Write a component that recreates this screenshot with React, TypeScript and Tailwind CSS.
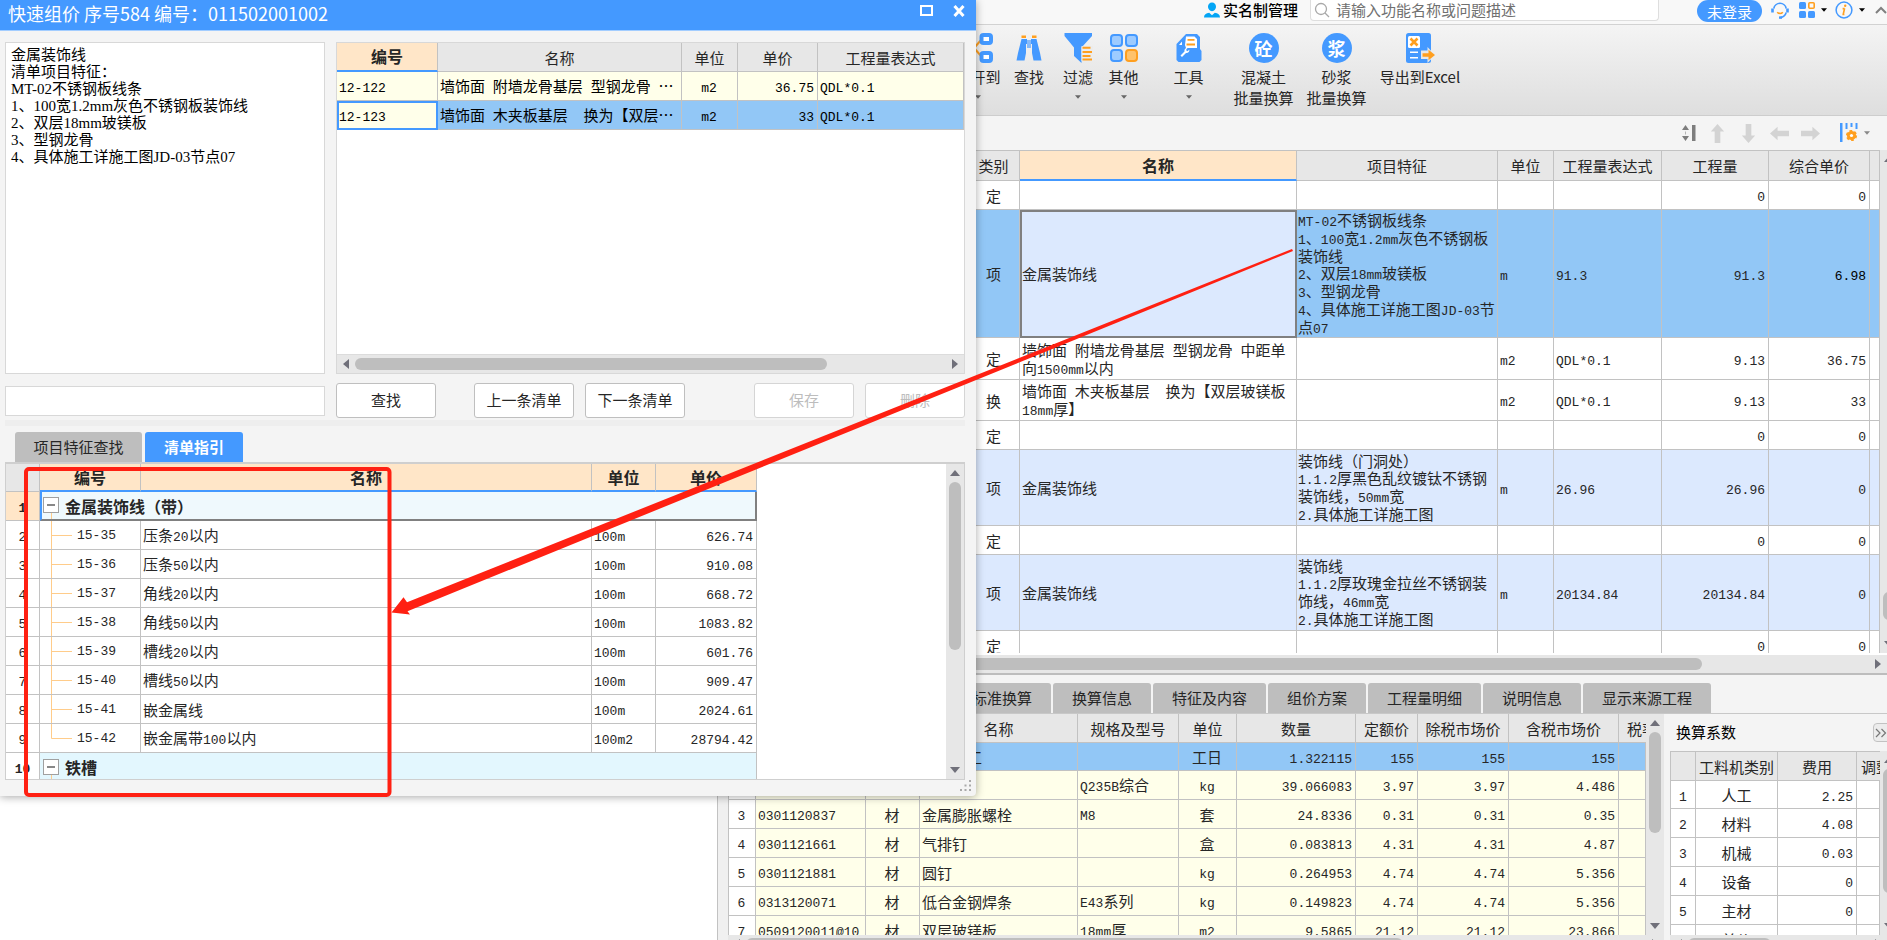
import React from "react";
import clsx from "clsx";

/* Latin runs use a narrow mono face, Chinese runs keep the page font. */
function T({ children }: { children: string }) {
  const parts = children.split(/([\x20-\x7e]+)/).filter(Boolean);
  return (
    <>
      {parts.map((p, i) =>
        /^[\x20-\x7e]/.test(p) ? (
          <span key={i} className="font-['Liberation_Mono','Noto_Sans_CJK_SC',monospace] text-[13px] leading-none">
            {p}
          </span>
        ) : (
          <React.Fragment key={i}>{p}</React.Fragment>
        )
      )}
    </>
  );
}

const TABLE = "w-full table-fixed border-separate border-spacing-0";
const BARE = "overflow-hidden whitespace-pre border-b border-r border-[#c2c2c2] py-0 align-middle leading-[17px]";
const CELL = "overflow-hidden whitespace-pre border-b border-r border-[#c2c2c2] py-0 pl-0.5 pr-[3px] align-middle leading-[17px]";
const HEAD = "overflow-hidden whitespace-nowrap border-b border-r border-[#c2c2c2] py-0 text-center font-normal leading-[17px]";

function Tri({ dir, small, className }: { dir: "up" | "down" | "left" | "right"; small?: boolean; className?: string }) {
  const d = {
    up: "M0 6 5 0 10 6Z",
    down: "M0 0 10 0 5 6Z",
    left: "M6 0 6 10 0 5Z",
    right: "M0 0 6 5 0 10Z",
  }[dir];
  const vertical = dir === "up" || dir === "down";
  const size = small ? "h-1 w-1.5" : vertical ? "h-1.5 w-2.5" : "h-2.5 w-1.5";
  return (
    <svg viewBox={vertical ? "0 0 10 6" : "0 0 6 10"} className={clsx("shrink-0", size, className)} fill="currentColor" aria-hidden="true">
      <path d={d} />
    </svg>
  );
}

function HScroll({ thumb }: { thumb: string }) {
  return (
    <div className="flex h-[18px] shrink-0 items-center gap-1.5 bg-[#e7e7e7] px-1.5 text-[#70707a]">
      <Tri dir="left" />
      <div className="h-3 flex-1">
        <div className={clsx("h-3 rounded-full bg-[#bebebe]", thumb)} />
      </div>
      <Tri dir="right" />
    </div>
  );
}

function VScroll({ thumb }: { thumb: string }) {
  return (
    <div className="flex w-[18px] shrink-0 flex-col items-center bg-[#e7e7e7] py-1.5 text-[#70707a]">
      <Tri dir="up" />
      <div className="my-1.5 w-3 flex-1">
        <div className={clsx("w-3 rounded-full bg-[#bebebe]", thumb)} />
      </div>
      <Tri dir="down" />
    </div>
  );
}

/* ---------- top bar ---------- */

function TopBar() {
  return (
    <header className="flex h-[25px] shrink-0 items-start justify-end border-b border-[#d2d2d2] bg-[#f8f8f8]">
      <button className="mr-3 flex h-5 items-center gap-[3px] font-medium text-black">
        <svg viewBox="0 0 16 16" className="size-4" fill="#04a5f5" aria-hidden="true">
          <path d="M8 0.5c2.400 0 4 1.700 4 4.100C12 7 10.300 9.300 8 9.300S4 7 4 4.600C4 2.200 5.600 0.500 8 0.500Z" />
          <path d="M0 15.500c0-3 2-4.200 5.200-4.700L8 13.200l2.800-2.400C14 11.300 16 12.500 16 15.500Z" />
        </svg>
        实名制管理
      </button>
      <label className="mr-[38px] flex h-[21px] w-[349px] items-center gap-1.5 rounded-b border border-t-0 border-[#dedede] bg-white pl-[3px]">
        <svg viewBox="0 0 16 16" className="size-4" fill="none" stroke="#a8a8a8" strokeWidth="1.300" aria-hidden="true">
          <circle cx="7" cy="7" r="5.500" />
          <path d="m11 11 4 4" />
        </svg>
        <input
          aria-label="搜索功能"
          placeholder="请输入功能名称或问题描述"
          className="min-w-0 flex-1 bg-transparent outline-none placeholder:text-[#707070]"
        />
      </label>
      <button className="mr-[9px] h-[22px] w-[65px] rounded-full bg-[#4499ff] leading-[21px] text-white">未登录</button>
      <button aria-label="客服" className="mr-2.5 mt-px">
        <svg viewBox="0 0 18 18" className="size-[18px]" fill="none" stroke="#4499ff" strokeWidth="1.600" aria-hidden="true">
          <path d="M2.800 7.500a6.300 6.300 0 0 1 12.400 0M15.200 11.500c-.8 2.800-2.800 4.600-5.700 4.900" />
          <path d="M1.500 7.500v4M16.500 7.500v4" strokeWidth="2.600" />
          <path d="M8 16.600h3" strokeWidth="2.400" />
          <path d="M6.200 11.200c1.600 1.700 4 1.700 5.600 0" stroke="#ff9f1f" />
        </svg>
      </button>
      <button aria-label="应用" className="mr-2 mt-0.5 flex items-center gap-1.5 text-black">
        <svg viewBox="0 0 16 16" className="size-4" fill="#4499ff" aria-hidden="true">
          <rect width="7" height="7" rx="1.500" />
          <rect y="9" width="7" height="7" rx="1.500" />
          <rect x="9" y="9" width="7" height="7" rx="1.500" />
          <rect x="9.800" y="0.800" width="5.400" height="5.400" rx="1" fill="none" stroke="#ff9f1f" strokeWidth="1.600" />
        </svg>
        <Tri dir="down" small />
      </button>
      <button aria-label="信息" className="mr-2.5 mt-px flex items-center gap-1.5 text-black">
        <svg viewBox="0 0 18 18" className="size-[18px]" fill="none" aria-hidden="true">
          <circle cx="9" cy="9" r="7.900" stroke="#4499ff" strokeWidth="1.500" />
          <path d="M9.600 7.300 8.200 13.500M7.600 7.600h2M7.400 13.500h2" stroke="#ff9f1f" strokeWidth="1.600" />
          <circle cx="10.200" cy="4.800" r="1.200" fill="#ff9f1f" />
        </svg>
        <Tri dir="down" small />
      </button>
      <button aria-label="收起" className="mt-1.5">
        <svg viewBox="0 0 12 8" className="h-2 w-3" fill="none" stroke="#808080" strokeWidth="2" aria-hidden="true">
          <path d="m1 7 5-5 5 5" />
        </svg>
      </button>
    </header>
  );
}

/* ---------- ribbon ---------- */

const ICON = "size-[30px]";

const ExpandIcon = () => (
  <svg viewBox="0 0 30 30" className={ICON} fill="none" aria-hidden="true">
    <path d="M5 15h6M11 15l8-9M11 15l8 9" stroke="#ff9f1f" strokeWidth="2" />
    <rect x="18.500" y="2" width="9.500" height="8" rx="2" stroke="#4499ff" strokeWidth="4" fill="#fff" />
    <rect x="18.500" y="20" width="9.500" height="8" rx="2" stroke="#4499ff" strokeWidth="4" fill="#fff" />
  </svg>
);
const FindIcon = () => (
  <svg viewBox="0 0 30 30" className={ICON} fill="#4499ff" aria-hidden="true">
    <path d="M7.500 6h5.500v5h-1v9l-1.500 7.500H2.500L4 20Z" />
    <path d="M22.500 6H17v5h1v9l1.500 7.500h8L26 20Z" />
    <rect x="13.400" y="7" width="1.200" height="8" />
    <rect x="15.400" y="7" width="1.200" height="8" />
    <rect x="7.500" y="2.500" width="4.500" height="2.500" fill="#ff9f1f" />
    <rect x="18" y="2.500" width="4.500" height="2.500" fill="#ff9f1f" />
  </svg>
);
const FilterIcon = () => (
  <svg viewBox="0 0 30 30" className={ICON} fill="#4499ff" aria-hidden="true">
    <path d="M1.500 0h27.500v3L18.500 14.500V30L11 23V14.500L1.500 3Z" />
    <path d="M18.500 13h11.500v15h-11.500Z" fill="#ececec" />
    <path d="M19.500 13.800h8v2h-8ZM19.500 18h9.500v2h-9.500ZM19.500 22h8v2h-8ZM19.500 25.500h9.500v2h-9.500Z" fill="#ff9f1f" />
  </svg>
);
const OtherIcon = () => (
  <svg viewBox="0 0 30 30" className={ICON} fill="#9dcbff" stroke="#4499ff" strokeWidth="2" aria-hidden="true">
    <rect x="2" y="2" width="11" height="11" rx="3" />
    <rect x="17" y="2" width="11" height="11" rx="3" />
    <rect x="2" y="17" width="11" height="11" rx="3" />
    <rect x="17" y="17" width="11" height="11" rx="3" fill="#ffc26b" stroke="#ff9f1f" />
  </svg>
);
const ToolIcon = () => (
  <svg viewBox="0 0 30 30" className={ICON} fill="#4499ff" aria-hidden="true">
    <path d="M2.500 27V11L12 1h11l3 3v12l1.500 2v9l-2 2H4.500Z" />
    <path d="M5 12 8 8.500V12ZM12 3.500h8.500L23 6v9H12l-1-3Z" fill="#fff" />
    <path d="M13.500 6h7v1.800h-7ZM12.500 10.500h8.500v2h-8.500Z" fill="#ff9f1f" />
    <path d="m6.500 22.500 4-4c-.5-2 1-3.800 3-3.500l-1.500 2 1.300 1.300 2-1.500c.5 2-1.300 3.500-3.300 3.200l-4 4Z" fill="#fff" />
  </svg>
);
const ExcelIcon = () => (
  <svg viewBox="0 0 30 30" className={ICON} fill="none" aria-hidden="true">
    <rect x="1" y="0" width="25" height="30" rx="2.500" fill="#4499ff" />
    <rect x="3" y="3" width="12" height="12" rx="1.500" fill="#fff" />
    <path d="m5.500 5.500 7 7M12.500 5.500l-7 7" stroke="#ff9f1f" strokeWidth="2.600" />
    <path d="M5 19.200h8M5 24.800h8" stroke="#fff" strokeWidth="1.600" />
    <path d="M16 17.500h6.500V14L30 22l-7.500 8v-4H16Z" fill="#e8e8e8" />
    <path d="M17.500 20.200h6v-3.500l6.500 5.300-6.500 5.300v-3.500h-6Z" fill="#ff9f1f" />
  </svg>
);
const RoundGlyph = ({ text }: { text: string }) => (
  <span className="flex size-[30px] items-center justify-center rounded-full bg-[#4499ff] text-lg font-bold leading-none text-white">
    {text}
  </span>
);

function RibbonItem({ icon, label, sub, caret, className }: { icon: React.ReactNode; label: string; sub?: string; caret?: boolean; className: string }) {
  return (
    <button className={clsx("flex shrink-0 flex-col items-center whitespace-nowrap leading-[21px]", className)}>
      {icon}
      <span className="mt-[3px]">{label}</span>
      {sub && <span>{sub}</span>}
      {caret && <Tri dir="down" small className="mt-2 text-[#666]" />}
    </button>
  );
}

function Ribbon() {
  return (
    <nav className="flex h-[91px] shrink-0 items-start border-b border-[#cdcdcd] bg-linear-to-b from-[#f4f4f4] to-[#dedede] pl-[953px] pt-2">
      <RibbonItem className="w-[50px]" icon={<ExpandIcon />} label="展开到" caret />
      <RibbonItem className="w-[52px]" icon={<FindIcon />} label="查找" />
      <RibbonItem className="w-[46px]" icon={<FilterIcon />} label="过滤" caret />
      <RibbonItem className="mr-5 w-[45px]" icon={<OtherIcon />} label="其他" caret />
      <RibbonItem className="mr-4 w-[45px]" icon={<ToolIcon />} label="工具" caret />
      <RibbonItem className="w-[73px]" icon={<RoundGlyph text="砼" />} label="混凝土" sub="批量换算" />
      <RibbonItem className="w-[73px]" icon={<RoundGlyph text="浆" />} label="砂浆" sub="批量换算" />
      <RibbonItem className="w-[94px]" icon={<ExcelIcon />} label="导出到Excel" />
    </nav>
  );
}

const ARROW = "M10 0 17 8h-4v12H7V8H3Z";
function ArrowButton({ label, turn }: { label: string; turn: string }) {
  return (
    <button aria-label={label}>
      <svg viewBox="0 0 20 20" className={clsx("size-[19px]", turn)} fill="#d3d3d3" aria-hidden="true">
        <path d={ARROW} />
      </svg>
    </button>
  );
}

function ToolStrip() {
  return (
    <div className="flex h-[34px] shrink-0 items-center justify-end gap-3 bg-[#f4f4f4] pr-[17px]">
      <button aria-label="行高">
        <svg viewBox="0 0 14 16" className="h-4 w-3.5" fill="#7d7d7d" aria-hidden="true">
          <path d="M0 5 3.500 0 7 5ZM0 11l3.500 5L7 11Z" />
          <path d="M3 6.500h1v3H3Z" fill="#b5b5b5" />
          <rect x="10" width="3.500" height="16" />
        </svg>
      </button>
      <ArrowButton label="上移" turn="rotate-0" />
      <ArrowButton label="下移" turn="rotate-180" />
      <ArrowButton label="左移" turn="-rotate-90" />
      <ArrowButton label="右移" turn="rotate-90" />
      <button aria-label="列设置" className="ml-2 flex items-center gap-1.5 text-[#888]">
        <svg viewBox="0 0 18 20" className="h-5 w-[18px]" fill="#4499ff" aria-hidden="true">
          <path d="M0 0h2.500v19H0ZM5.500 0h2v6h-2ZM10.500 0h2v4h-2ZM15.500 0h2v6h-2Z" />
          <circle cx="11.500" cy="12.500" r="4.600" fill="#ff9f1f" stroke="#ff9f1f" strokeWidth="2" strokeDasharray="2.600 2.200" />
          <circle cx="11.500" cy="12.500" r="1.600" fill="#fff" />
        </svg>
        <Tri dir="down" small />
      </button>
    </div>
  );
}

/* ---------- main bill table ---------- */

type BillRow = { h: string; kind: string; name?: string; feat?: string; unit?: string; expr?: string; qty: string; price: string; tone?: "active" | "item" };

const BILL: BillRow[] = [
  { h: "h-[29px]", kind: "定", qty: "0", price: "0" },
  {
    h: "h-[128px]",
    kind: "项",
    name: "金属装饰线",
    feat: "MT-02不锈钢板线条\n1、100宽1.2mm灰色不锈钢板\n装饰线\n2、双层18mm玻镁板\n3、型钢龙骨\n4、具体施工详施工图JD-03节\n点07",
    unit: "m",
    expr: "91.3",
    qty: "91.3",
    price: "6.98",
    tone: "active",
  },
  { h: "h-[42px]", kind: "定", name: "墙饰面 附墙龙骨基层 型钢龙骨 中距单\n向1500mm以内", unit: "m2", expr: "QDL*0.1", qty: "9.13", price: "36.75" },
  { h: "h-[41px]", kind: "换", name: "墙饰面 木夹板基层  换为【双层玻镁板\n18mm厚】", unit: "m2", expr: "QDL*0.1", qty: "9.13", price: "33" },
  { h: "h-[29px]", kind: "定", qty: "0", price: "0" },
  { h: "h-[76px]", kind: "项", name: "金属装饰线", feat: "装饰线（门洞处）\n1.1.2厚黑色乱纹镀钛不锈钢\n装饰线，50mm宽\n2.具体施工详施工图", unit: "m", expr: "26.96", qty: "26.96", price: "0", tone: "item" },
  { h: "h-[29px]", kind: "定", qty: "0", price: "0" },
  { h: "h-[76px]", kind: "项", name: "金属装饰线", feat: "装饰线\n1.1.2厚玫瑰金拉丝不锈钢装\n饰线，46mm宽\n2.具体施工详施工图", unit: "m", expr: "20134.84", qty: "20134.84", price: "0", tone: "item" },
  { h: "h-[29px]", kind: "定", qty: "0", price: "0" },
];

function BillTable() {
  return (
    <section className="flex min-h-0 flex-1 flex-col border-b-2 border-[#bdbdbd]">
      <div className="flex min-h-0 flex-1">
        <div className="min-w-0 flex-1 overflow-hidden bg-white">
          <table className={TABLE}>
            <colgroup>
              <col className="w-[968px]" />
              <col className="w-[52px]" />
              <col />
              <col className="w-[201px]" />
              <col className="w-[56px]" />
              <col className="w-[108px]" />
              <col className="w-[107px]" />
              <col className="w-[101px]" />
              <col className="w-[10px]" />
            </colgroup>
            <thead>
              <tr className="h-[31px] bg-[#e7e7e7]">
                <th className={clsx(HEAD, "border-t")} />
                <th className={clsx(HEAD, "border-t")}>类别</th>
                <th className="border-b-2 border-r border-t border-b-[#4499ff] border-r-[#c2c2c2] border-t-[#c2c2c2] bg-[#ffe6c8] p-0 text-center text-base font-bold leading-[17px]">名称</th>
                <th className={clsx(HEAD, "border-t")}>项目特征</th>
                <th className={clsx(HEAD, "border-t")}>单位</th>
                <th className={clsx(HEAD, "border-t")}>工程量表达式</th>
                <th className={clsx(HEAD, "border-t")}>工程量</th>
                <th className={clsx(HEAD, "border-t")}>综合单价</th>
                <th className={clsx(HEAD, "border-t")} />
              </tr>
            </thead>
            <tbody>
              {BILL.map((r, i) => (
                <tr key={i} className={clsx(r.h, r.tone === "active" && "bg-[#92c7f6]", r.tone === "item" && "bg-[#dce9fe]")}>
                  <td className={BARE} />
                  <td className={clsx(BARE, "text-center")}>{r.kind}</td>
                  <td className={clsx(CELL, r.tone === "active" && "bg-[#dce9fe] outline-2 -outline-offset-2 outline-[#808080]")}>
                    <T>{r.name ?? ""}</T>
                  </td>
                  <td className={clsx(BARE, "pl-px")}>
                    <T>{r.feat ?? ""}</T>
                  </td>
                  <td className={CELL}>
                    <T>{r.unit ?? ""}</T>
                  </td>
                  <td className={CELL}>
                    <T>{r.expr ?? ""}</T>
                  </td>
                  <td className={clsx(CELL, "text-right")}>
                    <T>{r.qty}</T>
                  </td>
                  <td className={clsx(CELL, "text-right", r.tone === "active" && "text-black")}>
                    <T>{r.price}</T>
                  </td>
                  <td className={BARE} />
                </tr>
              ))}
            </tbody>
          </table>
        </div>
        <div className="flex w-[7px] shrink-0 overflow-hidden">
          <VScroll thumb="mt-[424px] h-7" />
        </div>
      </div>
      <div className="border-t-2 border-white">
        <HScroll thumb="mr-[167px]" />
      </div>
    </section>
  );
}

/* ---------- bottom panels ---------- */

const MATERIALS: string[][] = [
  ["1", "", "", "综合人工", "", "工日", "1.322115", "155", "155", "155"],
  ["2", "", "", "", "Q235B综合", "kg", "39.066083", "3.97", "3.97", "4.486"],
  ["3", "0301120837", "材", "金属膨胀螺栓", "M8", "套", "24.8336", "0.31", "0.31", "0.35"],
  ["4", "0301121661", "材", "气排钉", "", "盒", "0.083813", "4.31", "4.31", "4.87"],
  ["5", "0301121881", "材", "圆钉", "", "kg", "0.264953", "4.74", "4.74", "5.356"],
  ["6", "0313120071", "材", "低合金钢焊条", "E43系列", "kg", "0.149823", "4.74", "4.74", "5.356"],
  ["7", "0509120011@10", "材", "双层玻镁板", "18mm厚", "m2", "9.5865", "21.12", "21.12", "23.866"],
];
const MATERIAL_HEADS = ["", "", "", "名称", "规格及型号", "单位", "数量", "定额价", "除税市场价", "含税市场价"];
const MATERIAL_ALIGN = ["text-center", "", "text-center", "", "", "text-center", "text-right", "text-right", "text-right", "text-right"];

const FACTORS: string[][] = [
  ["1", "人工", "2.25"],
  ["2", "材料", "4.08"],
  ["3", "机械", "0.03"],
  ["4", "设备", "0"],
  ["5", "主材", "0"],
  ["6", "单价", "4.21"],
];

const TABS = ["标准换算", "换算信息", "特征及内容", "组价方案", "工程量明细", "说明信息", "显示来源工程"];

function BottomPanels() {
  return (
    <section className="flex h-[265px] shrink-0 flex-col bg-[#f4f4f4] pt-2">
      <div role="tablist" className="flex h-[30px] shrink-0 gap-0.5 pl-[953px]">
        {TABS.map((t) => (
          <button key={t} role="tab" className="whitespace-nowrap rounded-t-[3px] bg-[#bebebe] px-[19px]">
            {t}
          </button>
        ))}
      </div>
      <div className="flex min-h-0 flex-1 border-t border-[#c8c8c8]">
        <div className="w-[718px] shrink-0 border-r border-[#c2c2c2] bg-white" />
        <div className="w-2.5 shrink-0 bg-[#f0f0f0]" />
        <div className="flex min-w-0 flex-1 flex-col">
          <div className="flex min-h-0 flex-1">
            <div className="min-w-0 flex-1 overflow-hidden border-l border-[#c2c2c2] bg-white">
              <table className={TABLE}>
                <colgroup>
                  <col className="w-[27px]" />
                  <col className="w-[110px]" />
                  <col className="w-[54px]" />
                  <col />
                  <col className="w-[101px]" />
                  <col className="w-[58px]" />
                  <col className="w-[119px]" />
                  <col className="w-[62px]" />
                  <col className="w-[91px]" />
                  <col className="w-[110px]" />
                  <col className="w-[27px]" />
                </colgroup>
                <thead>
                  <tr className="h-[29px] bg-[#e7e7e7]">
                    {MATERIAL_HEADS.map((h, i) => (
                      <th key={i} className={HEAD}>
                        {h}
                      </th>
                    ))}
                    <th className="overflow-hidden whitespace-nowrap border-b border-[#c2c2c2] py-0 pl-2 text-left font-normal leading-[17px]">税率</th>
                  </tr>
                </thead>
                <tbody>
                  {MATERIALS.map((r, i) => (
                    <tr key={r[0]} className={clsx(i === 0 ? "h-7 bg-[#92c7f6]" : "h-[29px] bg-[#ffffea]")}>
                      {r.map((c, j) => (
                        <td key={j} className={clsx(CELL, MATERIAL_ALIGN[j], j === 0 && "bg-white")}>
                          <T>{c}</T>
                        </td>
                      ))}
                      <td className={BARE} />
                    </tr>
                  ))}
                </tbody>
              </table>
            </div>
            <VScroll thumb="h-[101px]" />
          </div>
          <div className="h-[5px] shrink-0 overflow-hidden">
            <HScroll thumb="mr-[243px]" />
          </div>
        </div>
        <div className="flex w-[223px] shrink-0 flex-col pl-1.5">
          <div className="flex h-[37px] shrink-0 items-center justify-between pl-1.5">
            <span className="text-black">换算系数</span>
            <div className="w-3.5 overflow-hidden">
              <button aria-label="展开" className="flex h-[19px] w-5 items-center rounded border border-[#c2c2c2] bg-[#ececec]">
                <svg viewBox="0 0 14 10" className="h-2.5 w-3.5" fill="none" stroke="#777" strokeWidth="1.200" aria-hidden="true">
                  <path d="m2 1 4 4-4 4M7.500 1l4 4-4 4" />
                </svg>
              </button>
            </div>
          </div>
          <div className="flex min-h-0 flex-1">
            <div className="min-w-0 flex-1 overflow-hidden border-l border-t border-[#c2c2c2] bg-white">
              <table className={TABLE}>
                <colgroup>
                  <col className="w-[25px]" />
                  <col />
                  <col className="w-[79px]" />
                  <col className="w-[23px]" />
                </colgroup>
                <thead>
                  <tr className="h-[29px] bg-[#e7e7e7]">
                    <th className={HEAD} />
                    <th className={HEAD}>工料机类别</th>
                    <th className={HEAD}>费用</th>
                    <th className="overflow-hidden whitespace-nowrap border-b border-[#c2c2c2] py-0 pl-1 text-left font-normal leading-[17px]">调整</th>
                  </tr>
                </thead>
                <tbody>
                  {FACTORS.map((r, i) => (
                    <tr key={r[0]} className={i === 0 ? "h-7" : "h-[29px]"}>
                      <td className={clsx(BARE, "text-center")}>
                        <T>{r[0]}</T>
                      </td>
                      <td className={clsx(BARE, "text-center")}>{r[1]}</td>
                      <td className={clsx(CELL, "text-right")}>
                        <T>{r[2]}</T>
                      </td>
                      <td className={BARE} />
                    </tr>
                  ))}
                </tbody>
              </table>
            </div>
            <div className="flex w-[7px] shrink-0 overflow-hidden">
              <VScroll thumb="h-[124px]" />
            </div>
          </div>
          <div className="h-[5px] shrink-0 overflow-hidden">
            <HScroll thumb="mr-[98px]" />
          </div>
        </div>
      </div>
    </section>
  );
}

/* ---------- quick pricing dialog ---------- */

const DETAIL = "金属装饰线\n清单项目特征：\nMT-02不锈钢板线条\n1、100宽1.2mm灰色不锈钢板装饰线\n2、双层18mm玻镁板\n3、型钢龙骨\n4、具体施工详施工图JD-03节点07";

const GUIDE: string[][] = [
  ["2", "15-35", "压条20以内", "100m", "626.74"],
  ["3", "15-36", "压条50以内", "100m", "910.08"],
  ["4", "15-37", "角线20以内", "100m", "668.72"],
  ["5", "15-38", "角线50以内", "100m", "1083.82"],
  ["6", "15-39", "槽线20以内", "100m", "601.76"],
  ["7", "15-40", "槽线50以内", "100m", "909.47"],
  ["8", "15-41", "嵌金属线", "100m", "2024.61"],
  ["9", "15-42", "嵌金属带100以内", "100m2", "28794.42"],
];

function Collapse({ label }: { label: string }) {
  return (
    <button aria-label={label} className="shrink-0">
      <svg viewBox="0 0 16 29" className="block h-[29px] w-4" fill="none" aria-hidden="true">
        <path d="M8.500 22v7" stroke="#ffcc8a" />
        <rect x="0.500" y="6.500" width="15" height="15" fill="#fff" stroke="#a0a0a0" />
        <path d="M4 14h8" stroke="#555" strokeWidth="1.400" />
      </svg>
    </button>
  );
}

const BTN = "h-[35px] w-[100px] shrink-0 rounded-[3px] border bg-white";
const GROUP_HEAD = "border-b-2 border-r border-b-[#4499ff] border-r-[#c2c2c2] bg-[#ffe6c8] p-0 text-center text-base font-bold leading-[17px]";

function PricingDialog() {
  return (
    <div role="dialog" aria-label="快速组价" className="absolute left-0 top-0 flex w-[976px] flex-col overflow-hidden rounded-br bg-[#f4f4f4] shadow-[0_1px_8px_rgba(0,0,0,0.35)]">
      <div className="flex h-[31px] shrink-0 items-start justify-between border-b border-[#a3cdff] bg-[#4499ff] pl-2 pr-[11px] text-white">
        <h1 className="text-lg leading-[26px]">快速组价 序号584 编号：011502001002</h1>
        <div className="flex h-[21px] items-center gap-5">
          <button aria-label="最大化" className="h-[11px] w-[13px] border-2 border-white" />
          <button aria-label="关闭">
            <svg viewBox="0 0 12 12" className="size-3" stroke="#fff" strokeWidth="3" aria-hidden="true">
              <path d="m1.500 1 9 10M10.500 1l-9 10" />
            </svg>
          </button>
        </div>
      </div>

      <div className="flex gap-[11px] pl-[5px] pr-[11px] pt-[11px]">
        <textarea
          aria-label="清单项目特征"
          defaultValue={DETAIL}
          className="h-[332px] w-[320px] shrink-0 resize-none overflow-hidden border border-[#d8d8d8] bg-white px-[5px] py-1 font-['Liberation_Serif','Noto_Sans_CJK_SC',serif] leading-[17px] text-black outline-none"
        />
        <div className="flex h-[332px] min-w-0 flex-1 flex-col border border-[#d8d8d8] bg-white">
          <div className="min-h-0 flex-1 border-b border-[#dcdcdc]">
            <table className={TABLE}>
              <colgroup>
                <col className="w-[101px]" />
                <col className="w-[244px]" />
                <col className="w-[56px]" />
                <col className="w-[80px]" />
                <col />
              </colgroup>
              <thead>
                <tr className="h-[29px] bg-[#e7e7e7]">
                  <th className={GROUP_HEAD}>编号</th>
                  <th className={HEAD}>名称</th>
                  <th className={HEAD}>单位</th>
                  <th className={HEAD}>单价</th>
                  <th className={HEAD}>工程量表达式</th>
                </tr>
              </thead>
              <tbody className="text-black">
                <tr className="h-[29px] bg-[#ffffea]">
                  <td className={CELL}><T>12-122</T></td>
                  <td className={CELL}><T>墙饰面 附墙龙骨基层 型钢龙骨 …</T></td>
                  <td className={clsx(CELL, "text-center")}><T>m2</T></td>
                  <td className={clsx(CELL, "text-right")}><T>36.75</T></td>
                  <td className={CELL}><T>QDL*0.1</T></td>
                </tr>
                <tr className="h-[29px] bg-[#92c7f6]">
                  <td className={clsx(CELL, "bg-[#ffffea] outline-2 -outline-offset-2 outline-[#4499ff]")}><T>12-123</T></td>
                  <td className={CELL}><T>墙饰面 木夹板基层  换为【双层…</T></td>
                  <td className={clsx(CELL, "text-center")}><T>m2</T></td>
                  <td className={clsx(CELL, "text-right")}><T>33</T></td>
                  <td className={CELL}><T>QDL*0.1</T></td>
                </tr>
              </tbody>
            </table>
          </div>
          <HScroll thumb="mr-[119px]" />
        </div>
      </div>

      <div className="flex h-11 items-end gap-[11px] pl-[5px] pr-[11px]">
        <input aria-label="查找内容" className="mb-0.5 h-[30px] w-[320px] shrink-0 border border-[#d8d8d8] bg-white px-1 outline-none" />
        <button className={clsx(BTN, "mr-[27px] border-[#bfbfbf]")}>查找</button>
        <button className={clsx(BTN, "border-[#bfbfbf]")}>上一条清单</button>
        <button className={clsx(BTN, "border-[#bfbfbf]")}>下一条清单</button>
        <button disabled className={clsx(BTN, "ml-auto border-[#d5d5d5] text-[#bdbdbd]")}>保存</button>
        <button disabled className={clsx(BTN, "border-[#d5d5d5] text-[#bdbdbd]")}>删除</button>
      </div>
      <div className="ml-[5px] mr-[11px] mt-0.5 h-1.5 bg-[#eeeeee]" />

      <div role="tablist" className="mt-1.5 flex h-[30px] gap-[3px] pl-[15px]">
        <button role="tab" aria-selected={false} className="w-[127px] rounded-t-[3px] bg-[#bebebe]">项目特征查找</button>
        <button role="tab" aria-selected className="w-[98px] rounded-t-[3px] bg-[#4499ff] font-bold text-white">清单指引</button>
      </div>

      <div className="mb-4 ml-[5px] mr-[11px] flex h-[318px] overflow-hidden border border-t-2 border-[#cfcfcf] bg-white">
        <div className="min-w-0 flex-1 overflow-hidden">
          <table className="w-[751px] table-fixed border-separate border-spacing-0">
            <colgroup>
              <col className="w-[34px]" />
              <col className="w-[101px]" />
              <col />
              <col className="w-[64px]" />
              <col className="w-[101px]" />
            </colgroup>
            <thead>
              <tr className="h-7">
                <th className={clsx(HEAD, "bg-[#e7e7e7]")} />
                <th className={GROUP_HEAD}>编号</th>
                <th className={GROUP_HEAD}>名称</th>
                <th className={GROUP_HEAD}>单位</th>
                <th className={GROUP_HEAD}>单价</th>
              </tr>
            </thead>
            <tbody>
              <tr className="h-[29px]">
                <td className={clsx(BARE, "bg-[#ffe6c8] text-center font-bold")}><T>1</T></td>
                <td colSpan={4} className="border-b-2 border-l-2 border-r-2 border-b-[#808080] border-l-[#4499ff] border-r-[#808080] bg-[#eff9fd] p-0">
                  <div className="flex h-[27px] items-center gap-1.5 overflow-hidden pl-px text-base font-bold">
                    <Collapse label="收起金属装饰线" />
                    金属装饰线（带）
                  </div>
                </td>
              </tr>
              {GUIDE.map((r, i) => (
                <tr key={r[0]} className="h-[29px]">
                  <td className={clsx(BARE, "text-center")}><T>{r[0]}</T></td>
                  <td className={BARE}>
                    <div className="flex h-7 items-center gap-[5px] pl-[11px]">
                      <svg viewBox="0 0 21 29" className="-mb-px h-[29px] w-[21px] shrink-0" fill="none" stroke="#ffcc8a" aria-hidden="true">
                        <path d={i === GUIDE.length - 1 ? "M.5 0v14.500H21" : "M.5 0v29M.5 14.500H21"} />
                      </svg>
                      <T>{r[1]}</T>
                    </div>
                  </td>
                  <td className={CELL}><T>{r[2]}</T></td>
                  <td className={CELL}><T>{r[3]}</T></td>
                  <td className={clsx(CELL, "text-right")}><T>{r[4]}</T></td>
                </tr>
              ))}
              <tr className="h-[29px]">
                <td className={clsx(BARE, "text-center font-bold")}><T>10</T></td>
                <td colSpan={4} className={clsx(BARE, "bg-[#e3f7fe]")}>
                  <div className="flex h-7 items-center gap-1.5 pl-[3px] text-base font-bold">
                    <Collapse label="收起铁槽" />
                    铁槽
                  </div>
                </td>
              </tr>
            </tbody>
          </table>
        </div>
        <VScroll thumb="h-[168px]" />
      </div>
      <svg viewBox="0 0 12 12" className="absolute bottom-1 right-1 size-3" fill="#a9a9a9" aria-hidden="true">
        <path d="M9 0h2v2H9ZM9 4.500h2v2H9ZM4.500 4.500h2v2h-2ZM9 9h2v2H9ZM4.500 9h2v2h-2ZM0 9h2v2H0Z" />
      </svg>
    </div>
  );
}

/* Red frame and arrow drawn over both windows. */
function Annotation() {
  return (
    <svg className="pointer-events-none absolute left-0 top-0 h-[940px] w-[1887px]" viewBox="0 0 1887 940" aria-hidden="true">
      <rect x="26" y="469" width="363.500" height="326" rx="3" fill="none" stroke="#ff2012" strokeWidth="4" />
      <path d="M1292 249 407 602.300 403.500 597.300 391.500 612.500 410 614.500 407.500 611.300 1293 251Z" fill="#ff2012" />
    </svg>
  );
}

export default function App() {
  return (
    <main lang="zh-CN" className="relative flex h-screen flex-col overflow-hidden bg-[#f4f4f4] font-['Noto_Sans_CJK_SC',sans-serif] text-[15px] text-[#262626]">
      <TopBar />
      <Ribbon />
      <ToolStrip />
      <BillTable />
      <BottomPanels />
      <PricingDialog />
      <Annotation />
    </main>
  );
}
